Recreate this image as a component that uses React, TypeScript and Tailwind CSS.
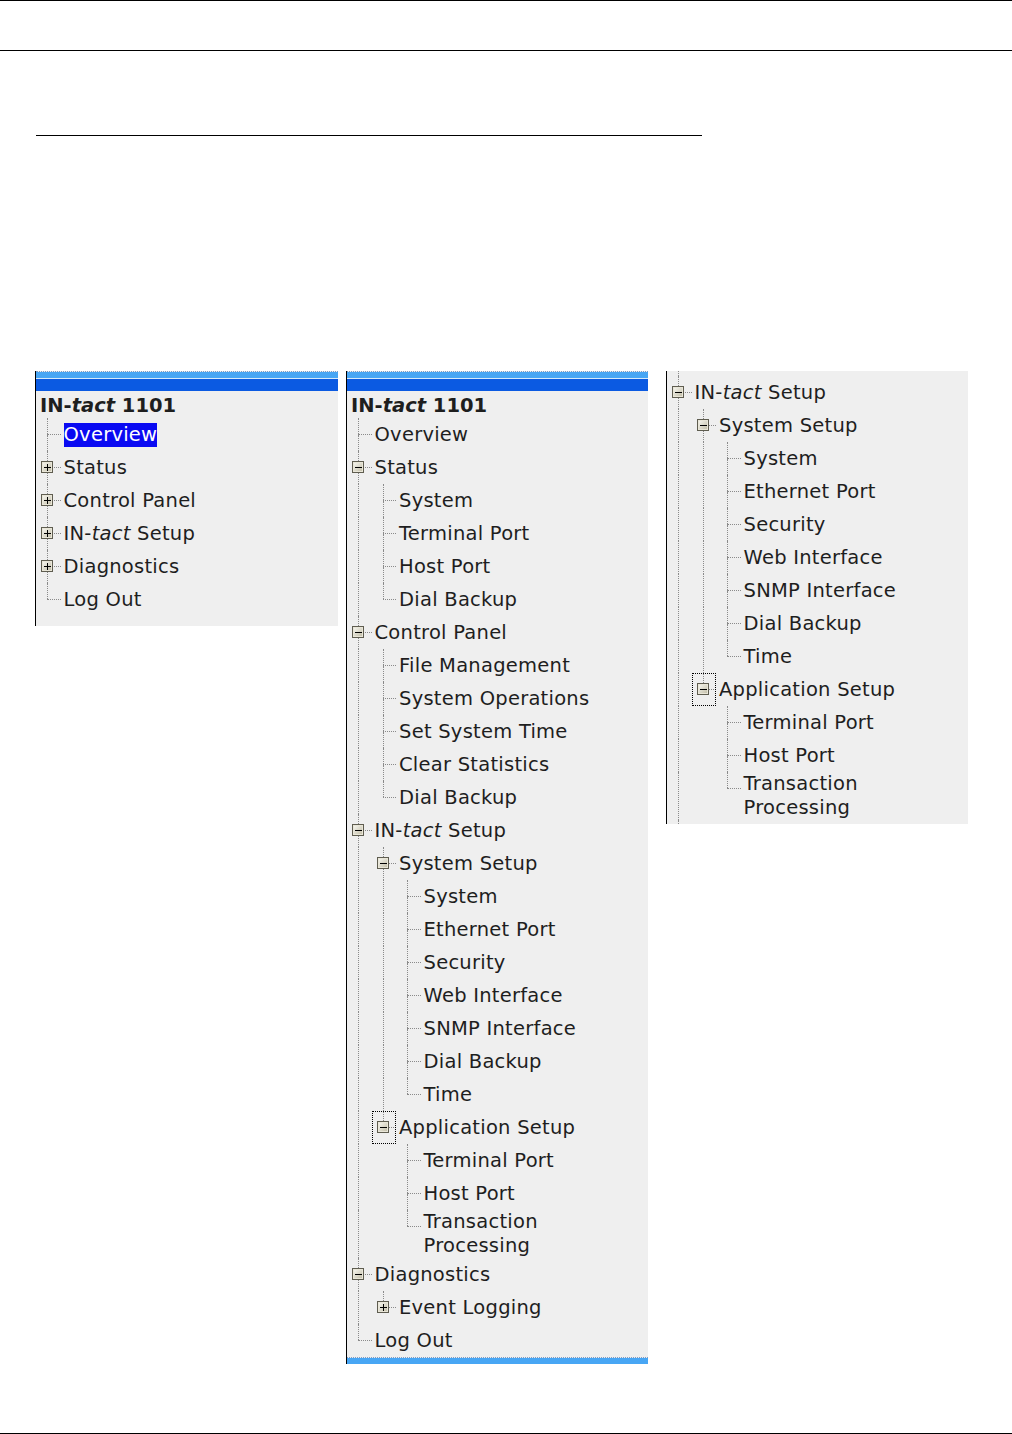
import React from 'react';
import clsx from 'clsx';

interface TreeNode {
  label: React.ReactNode;
  children?: TreeNode[];
  expanded?: boolean;
  selected?: boolean;
  focus?: boolean;
}

interface Row {
  node: TreeNode;
  guides: boolean[];
  isLast: boolean;
}

const intact = (
  <>
    IN-<i>tact</i>
  </>
);

const leaf = (label: React.ReactNode, extra: Partial<TreeNode> = {}): TreeNode => ({ label, ...extra });

const statusKids = ['System', 'Terminal Port', 'Host Port', 'Dial Backup'].map(l => leaf(l));
const controlKids = [
  'File Management',
  'System Operations',
  'Set System Time',
  'Clear Statistics',
  'Dial Backup',
].map(l => leaf(l));

const intactSetup: TreeNode = {
  label: <>{intact} Setup</>,
  expanded: true,
  children: [
    {
      label: 'System Setup',
      expanded: true,
      children: [
        'System',
        'Ethernet Port',
        'Security',
        'Web Interface',
        'SNMP Interface',
        'Dial Backup',
        'Time',
      ].map(l => leaf(l)),
    },
    {
      label: 'Application Setup',
      expanded: true,
      focus: true,
      children: ['Terminal Port', 'Host Port', 'Transaction Processing'].map(l => leaf(l)),
    },
  ],
};

// collapsed menu (left panel)
const collapsedTree: TreeNode[] = [
  leaf('Overview', { selected: true }),
  { label: 'Status', children: statusKids },
  { label: 'Control Panel', children: controlKids },
  { label: <>{intact} Setup</>, children: intactSetup.children },
  { label: 'Diagnostics', children: [leaf('Event Logging')] },
  leaf('Log Out'),
];

// fully expanded menu (middle panel)
const expandedTree: TreeNode[] = [
  leaf('Overview'),
  { label: 'Status', expanded: true, children: statusKids },
  { label: 'Control Panel', expanded: true, children: controlKids },
  intactSetup,
  {
    label: 'Diagnostics',
    expanded: true,
    children: [{ label: 'Event Logging', children: [leaf('Log')] }],
  },
  leaf('Log Out'),
];

// trailing = the list goes on past what is shown, so the last item keeps its line
function flatten(nodes: TreeNode[], guides: boolean[], out: Row[], trailing = false) {
  nodes.forEach((node, i) => {
    const isLast = i === nodes.length - 1 && !trailing;
    out.push({ node, guides, isLast });
    if (node.children && node.expanded) flatten(node.children, [...guides, !isLast], out);
  });
  return out;
}

const dotted = 'border-dotted border-[#8a8a8a]';

const ToggleBox: React.FC<{ expanded?: boolean; className?: string }> = ({ expanded, className }) => (
  <svg width="12" height="12" viewBox="0 0 12 12" className={className} shapeRendering="crispEdges">
    <defs>
      <linearGradient id="tbox" x1="0" y1="0" x2="1" y2="1">
        <stop offset="0" stopColor="#fdfdf8" />
        <stop offset="1" stopColor="#bdb8a0" />
      </linearGradient>
    </defs>
    <rect x="0.5" y="0.5" width="11" height="11" fill="url(#tbox)" stroke="#5f5d50" />
    <rect x="1.5" y="1.5" width="9" height="9" fill="none" stroke="#e9e6d8" />
    <line x1="3" y1="6.5" x2="10" y2="6.5" stroke="#000" />
    {!expanded && <line x1="6.5" y1="3" x2="6.5" y2="10" stroke="#000" />}
  </svg>
);

const TreeRow: React.FC<{ row: Row }> = ({ row }) => {
  const { node, guides, isLast } = row;
  return (
    <div className="flex min-h-[33px]">
      {guides.map((g, i) => (
        <div key={i} className="flex w-[24.5px] shrink-0">
          {g && <div className={clsx('ml-[11px] border-l', dotted)} />}
        </div>
      ))}
      <div
        className={clsx(
          'grid w-[24.5px] shrink-0',
          node.focus && 'outline-1 outline-dotted outline-black -outline-offset-1'
        )}
      >
        <div className="col-start-1 row-start-1 flex flex-col">
          <div className={clsx('ml-[11px] h-[16px] border-l', dotted)} />
          <div className={clsx('ml-[11px] border-t', dotted)} />
          <div className={clsx('ml-[11px] flex-1', !isLast && clsx('border-l', dotted))} />
        </div>
        {node.children && (
          <ToggleBox
            expanded={node.expanded}
            className="col-start-1 row-start-1 ml-[5px] mt-[10px] self-start justify-self-start"
          />
        )}
      </div>
      <div className="flex items-center pl-[3px] pr-1">
        <span className={clsx('leading-[24px]', node.selected && 'bg-[#0a0af2] text-white')}>
          {node.label}
        </span>
      </div>
    </div>
  );
};

const BlueStrip: React.FC = () => (
  <div className="flex flex-col">
    <div className="h-px border-t border-dotted border-[#7f9cc4]" />
    <div className="h-[6px] bg-[#48a6f4]" />
    <div className="h-px bg-[#d4e9fb]" />
    <div className="h-[12px] bg-[#0b5ae2]" />
  </div>
);

const Title: React.FC = () => (
  <div className="flex h-[27px] items-center pl-[4px] pt-[3px] font-bold leading-none tracking-normal">
    <span>
      IN-<i>tact</i> 1101
    </span>
  </div>
);

export default function App() {
  const rows1 = flatten(collapsedTree, [], []);
  const rows2 = flatten(expandedTree, [], []);
  const rows3 = flatten([intactSetup], [], [], true);

  return (
    <div
      className="flex min-h-[1434px] w-[1012px] flex-col bg-white text-[19.5px] tracking-[0.25px] text-[#1e1e1e]"
      style={{ fontFamily: '"DejaVu Sans", Verdana, sans-serif' }}
    >
      <div className="h-px bg-black" />
      <div className="mt-[49px] h-px bg-black" />
      <div className="ml-[36px] mt-[84px] h-px w-[666px] bg-black" />

      <div className="ml-[35px] mt-[235px] flex items-start">
        {/* collapsed */}
        <div className="w-[303px] border-l border-black bg-[#efefef] pb-[10px]">
          <BlueStrip />
          <Title />
          {rows1.map((r, i) => (
            <TreeRow key={i} row={r} />
          ))}
        </div>

        {/* expanded */}
        <div className="ml-[8px] w-[302px] border-l border-black bg-[#efefef]">
          <BlueStrip />
          <Title />
          {rows2.map((r, i) => (
            <TreeRow key={i} row={r} />
          ))}
          <div className="h-px border-t border-dotted border-[#7f9cc4]" />
          <div className="h-[6px] bg-[#48a6f4]" />
        </div>

        {/* IN-tact Setup detail */}
        <div className="ml-[18px] flex w-[302px] flex-col border-l border-black bg-[#efefef]">
          <div className="flex h-[5px]">
            <div className={clsx('ml-[11px] border-l', dotted)} />
          </div>
          {rows3.map((r, i) => (
            <TreeRow key={i} row={r} />
          ))}
          <div className="flex h-[4px]">
            <div className={clsx('ml-[11px] border-l', dotted)} />
          </div>
        </div>
      </div>

      <div className="flex-1" />
      <div className="h-px bg-black" />
    </div>
  );
}
